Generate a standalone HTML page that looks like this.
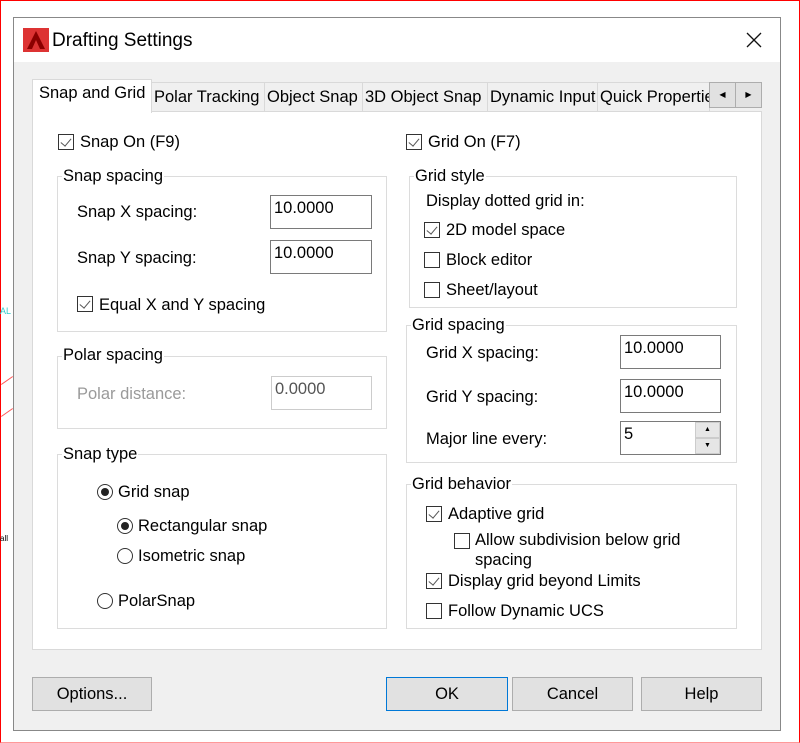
<!DOCTYPE html>
<html><head><style>
*{margin:0;padding:0;box-sizing:border-box}
body{width:800px;height:743px;background:#fff;position:relative;overflow:hidden;font-family:"Liberation Sans",sans-serif;font-size:16.5px;color:#000}
.a{position:absolute}
.t{position:absolute;line-height:18px;white-space:nowrap}
.cb{position:absolute;width:16px;height:16px;border:1px solid #333;background:#fff}
.cb.on::after{content:"";position:absolute;left:4px;top:1px;width:5px;height:9px;border-right:1.5px solid #555;border-bottom:1.5px solid #555;transform:rotate(40deg)}
.rb{position:absolute;width:16px;height:16px;border:1px solid #333;border-radius:50%;background:#fff}
.rb.on::after{content:"";position:absolute;left:3px;top:3px;width:8px;height:8px;border-radius:50%;background:#222}
.in{position:absolute;border:1px solid #7a7a7a;background:#fff;padding:3px 0 0 3px;line-height:18px}
.gb{position:absolute;border:1px solid #dcdcdc}
.gt{position:absolute;background:#fff;line-height:18px;padding:0 1px}
.tab{position:absolute;top:82px;height:29px;background:#f0f0f0;border:1px solid #d9d9d9;border-bottom:none;line-height:28px;padding-left:2px;white-space:nowrap;overflow:hidden}
.btn{position:absolute;top:677px;height:34px;background:#e1e1e1;border:1px solid #adadad;text-align:center;line-height:32px}
</style></head><body>
<div class="a" style="left:0;top:0;width:800px;height:743px;border:1px solid #f00;border-bottom-color:#f99"></div>
<div class="t" style="left:0;top:302px;color:#3cc;font-size:9px">AL</div>
<div class="a" style="left:0;top:380px;width:14px;height:1px;background:#f55;transform:rotate(-35deg)"></div>
<div class="a" style="left:0;top:412px;width:14px;height:1px;background:#f55;transform:rotate(-35deg)"></div>
<div class="t" style="left:0;top:530px;font-size:8px">all</div>
<div class="a" style="left:13px;top:17px;width:768px;height:714px;background:#f0f0f0;border:1px solid #888"></div>
<div class="a" style="left:14px;top:18px;width:766px;height:44px;background:#fff"></div>
<svg class="a" style="left:23px;top:28px" width="26" height="24"><rect width="26" height="24" fill="#d33"/><path d="M4 21 L13 3 L22 21 L17 21 L13 12 L9 21Z" fill="#8b0000"/></svg>
<div class="t" style="left:52px;top:30px;font-size:19px;line-height:22px">Drafting Settings</div>
<svg class="a" style="left:745px;top:31px" width="18" height="18"><path d="M2 2L16 16M16 2L2 16" stroke="#111" stroke-width="1.3"/></svg>
<div class="a" style="left:32px;top:111px;width:730px;height:539px;background:#fff;border:1px solid #d9d9d9"></div>
<div class="tab" style="left:151px;width:114px">Polar Tracking</div>
<div class="tab" style="left:264px;width:99px">Object Snap</div>
<div class="tab" style="left:362px;width:126px">3D Object Snap</div>
<div class="tab" style="left:487px;width:111px">Dynamic Input</div>
<div class="tab" style="left:597px;width:113px">Quick Properties</div>
<div class="a" style="left:32px;top:79px;width:120px;height:34px;background:#fff;border:1px solid #d9d9d9;border-bottom:none;padding:2px 0 0 6px;line-height:22px">Snap and Grid</div>
<div class="a" style="left:709px;top:82px;width:27px;height:26px;background:#e1e1e1;border:1px solid #adadad;font-size:8px;text-align:center;line-height:24px">◀</div>
<div class="a" style="left:735px;top:82px;width:27px;height:26px;background:#e1e1e1;border:1px solid #adadad;font-size:8px;text-align:center;line-height:24px">▶</div>

<div class="cb on" style="left:58px;top:134px"></div><div class="t" style="left:80px;top:133px">Snap On (F9)</div>
<div class="cb on" style="left:406px;top:134px"></div><div class="t" style="left:428px;top:133px">Grid On (F7)</div>

<div class="gb" style="left:57px;top:176px;width:330px;height:156px"></div><div class="gt" style="left:62px;top:167px">Snap spacing</div>
<div class="t" style="left:77px;top:203px">Snap X spacing:</div><div class="in" style="left:270px;top:195px;width:102px;height:34px">10.0000</div>
<div class="t" style="left:77px;top:249px">Snap Y spacing:</div><div class="in" style="left:270px;top:240px;width:102px;height:34px">10.0000</div>
<div class="cb on" style="left:77px;top:296px"></div><div class="t" style="left:99px;top:296px">Equal X and Y spacing</div>

<div class="gb" style="left:57px;top:356px;width:330px;height:73px"></div><div class="gt" style="left:62px;top:346px">Polar spacing</div>
<div class="t" style="left:77px;top:385px;color:#9a9a9a">Polar distance:</div><div class="in" style="left:271px;top:376px;width:101px;height:34px;border-color:#ccc;color:#555">0.0000</div>

<div class="gb" style="left:57px;top:454px;width:330px;height:175px"></div><div class="gt" style="left:62px;top:445px">Snap type</div>
<div class="rb on" style="left:97px;top:484px"></div><div class="t" style="left:118px;top:483px">Grid snap</div>
<div class="rb on" style="left:117px;top:518px"></div><div class="t" style="left:138px;top:517px">Rectangular snap</div>
<div class="rb" style="left:117px;top:548px"></div><div class="t" style="left:138px;top:547px">Isometric snap</div>
<div class="rb" style="left:97px;top:593px"></div><div class="t" style="left:118px;top:592px">PolarSnap</div>

<div class="gb" style="left:409px;top:176px;width:328px;height:132px"></div><div class="gt" style="left:414px;top:167px">Grid style</div>
<div class="t" style="left:426px;top:192px">Display dotted grid in:</div>
<div class="cb on" style="left:424px;top:222px"></div><div class="t" style="left:446px;top:221px">2D model space</div>
<div class="cb" style="left:424px;top:252px"></div><div class="t" style="left:446px;top:251px">Block editor</div>
<div class="cb" style="left:424px;top:282px"></div><div class="t" style="left:446px;top:281px">Sheet/layout</div>

<div class="gb" style="left:406px;top:325px;width:331px;height:138px"></div><div class="gt" style="left:411px;top:316px">Grid spacing</div>
<div class="t" style="left:426px;top:344px">Grid X spacing:</div><div class="in" style="left:620px;top:335px;width:101px;height:34px">10.0000</div>
<div class="t" style="left:426px;top:388px">Grid Y spacing:</div><div class="in" style="left:620px;top:379px;width:101px;height:34px">10.0000</div>
<div class="t" style="left:426px;top:430px">Major line every:</div><div class="in" style="left:620px;top:421px;width:101px;height:34px">5</div>
<div class="a" style="left:695px;top:422px;width:25px;height:16px;background:#e6e6e6;border:1px solid #ccc;font-size:7px;text-align:center;line-height:14px">▲</div>
<div class="a" style="left:695px;top:438px;width:25px;height:16px;background:#e6e6e6;border:1px solid #ccc;font-size:7px;text-align:center;line-height:14px">▼</div>

<div class="gb" style="left:406px;top:484px;width:331px;height:145px"></div><div class="gt" style="left:411px;top:475px">Grid behavior</div>
<div class="cb on" style="left:426px;top:506px"></div><div class="t" style="left:448px;top:505px">Adaptive grid</div>
<div class="cb" style="left:454px;top:533px"></div><div class="t" style="left:475px;top:530px;line-height:20px">Allow subdivision below grid<br>spacing</div>
<div class="cb on" style="left:426px;top:573px"></div><div class="t" style="left:448px;top:572px">Display grid beyond Limits</div>
<div class="cb" style="left:426px;top:603px"></div><div class="t" style="left:448px;top:602px">Follow Dynamic UCS</div>

<div class="btn" style="left:32px;width:120px">Options...</div>
<div class="btn" style="left:386px;width:122px;border:1px solid #0078d7">OK</div>
<div class="btn" style="left:512px;width:121px">Cancel</div>
<div class="btn" style="left:641px;width:121px">Help</div>
</body></html>
